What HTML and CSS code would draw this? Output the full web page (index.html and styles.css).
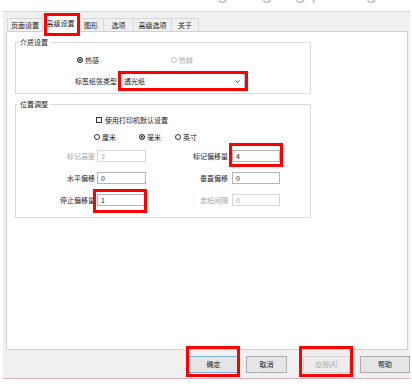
FILE: index.html
```html
<!DOCTYPE html>
<html>
<head>
<meta charset="utf-8">
<title>打印设置</title>
<link rel="stylesheet" href="styles.css">
</head>
<body>

<div class='recorte'><p class='recorte-texto'>Configuring tag printing settings</p></div>

<div id='janela'>

  <div class='abas'>
    <div class='aba w36'>页面设置</div>
    <div class='aba ativa w37'>高级设置<span class='marca m-aba'></span></div>
    <div class='aba w26'>图形</div>
    <div class='aba w31'>选项</div>
    <div class='aba w39'>高级选项</div>
    <div class='aba w28'>关于</div>
  </div>

  <div class='pagina'>

    <fieldset class='grupo' id='grupo1'>
      <legend>介质设置</legend>
      <div class='linha' id='linhatipo'>
        <span class='opcao'><span class='radio marcado'></span>热感</span>
        <span class='opcao desligado' id='opcaoterm'><span class='radio'></span>热转</span>
      </div>
      <div class='linha' id='linhapapel'>
        <span class='rotulo'>标签纸张类型</span>
        <span class='alvo'>
          <span class='combo'>透光纸
            <svg class='seta' width="5" height="3" viewBox="0 0 5 3"><polyline points="0.5,0.5 2.5,2.5 4.5,0.5" fill="none" stroke="#333" stroke-width="0.9"/></svg>
          </span>
          <span class='marca m-combo'></span>
        </span>
      </div>
    </fieldset>

    <fieldset class='grupo' id='grupo2'>
      <legend>位置调整</legend>
      <div class='linha' id='linhapadrao'>
        <span class='opcao'><span class='caixa'></span>使用打印机默认设置</span>
      </div>
      <div class='linha' id='linhaunidade'>
        <span class='opcao'><span class='radio'></span>厘米</span>
        <span class='opcao' id='opcaomm'><span class='radio marcado'></span>毫米</span>
        <span class='opcao' id='opcaopol'><span class='radio'></span>英寸</span>
      </div>

      <div class='campos'>
        <span class='rotulo desligado'>标记高度</span>
        <span class='entrada desligada'>3</span>
        <span class='rotulo dir'>标记偏移量</span>
        <span class='alvo'><span class='entrada'>4</span><span class='marca m-offset'></span></span>

        <span class='rotulo'>水平偏移</span>
        <span class='entrada'>0</span>
        <span class='rotulo dir'>垂直偏移</span>
        <span class='entrada'>0</span>

        <span class='rotulo'>停止偏移量</span>
        <span class='alvo'><span class='entrada'>1</span><span class='marca m-parada'></span></span>
        <span class='rotulo dir desligado'>走纸间隔</span>
        <span class='entrada desligada'>0</span>
      </div>
    </fieldset>

  </div>

  <div class='botoes'>
    <span class='alvo'><span class='botao padrao' id='bok'>确定</span><span class='marca m-ok'></span></span>
    <span class='botao' id='bcancel'>取消</span>
    <span class='alvo' id='aaplicar'><span class='botao inativo' id='baplicar'>应用(A)</span><span class='marca m-aplicar'></span></span>
    <span class='botao' id='bajuda'>帮助</span>
  </div>

</div>

</body>
</html>
```

FILE: styles.css
```css
*{ box-sizing: border-box; }
body{ margin: 0; background-color: #FFF; font-family: "Noto Sans CJK SC", "Noto Sans", sans-serif; font-size: 7px; color: #1A1A1A; }

.recorte{ height: 11px; overflow: hidden; }
.recorte-texto{ margin: -13px 0 0; padding-left: 170px; font-family: "Liberation Sans", sans-serif; font-size: 20px; line-height: 10px; color: #C4C4C4; white-space: nowrap; }

#janela{ margin-left: 3px; width: 407px; background-color: #F0F0F0; border-top: 1px solid #D6D6D6; border-bottom: 1px solid #DDB3C2; }

/* abas */
.abas{ display: flex; align-items: flex-end; padding: 2px 0 0 4px; height: 19px; }
.aba{ height: 13px; line-height: 12px; text-align: center; border: 1px solid #D9D9D9; border-bottom: none; background-color: #F0F0F0; white-space: nowrap; }
.aba + .aba{ margin-left: -1px; }
.aba.ativa{ position: relative; z-index: 1; height: 18px; line-height: 16px; margin-bottom: -1px; background-color: #FFF; }
.w26{ width: 26px; } .w28{ width: 28px; } .w31{ width: 31px; } .w36{ width: 36px; } .w37{ width: 37px; } .w39{ width: 39px; }

.pagina{ margin-left: 3px; width: 402px; height: 319px; background-color: #FFF; border: 1px solid #D0D0D0; padding-top: 6px; }

/* grupos */
.grupo{ margin: 0 0 0 8px; width: 296px; padding: 0; border: 1px solid #DCDCDC; }
.grupo legend{ margin-left: 2px; padding: 0 2px; line-height: 9px; }
#grupo1{ padding-bottom: 4px; }
#grupo2{ margin-top: 6px; padding-bottom: 11px; }

.linha{ display: flex; align-items: center; height: 11px; white-space: nowrap; }
#linhatipo{ margin-top: 7px; padding-left: 61px; }
#opcaoterm{ margin-left: 72px; }
#linhapapel{ margin-top: 8px; height: 16px; padding-left: 59px; }
#linhapadrao{ margin-top: 5px; padding-left: 80px; }
#linhaunidade{ margin-top: 6px; padding-left: 78px; }
#opcaomm{ margin-left: 23px; }
#opcaopol{ margin-left: 14px; }

.opcao{ display: inline-flex; align-items: center; }
.radio{ width: 6px; height: 6px; margin-right: 2px; border: 1px solid #333; border-radius: 50%; background-color: #FFF; }
.radio.marcado{ background-color: #222; box-shadow: inset 0 0 0 1px #FFF; }
.caixa{ width: 6px; height: 6px; margin-right: 3px; border: 1px solid #333; background-color: #FFF; }
.desligado{ color: #A6A6A6; }
.desligado .radio{ border-color: #C6C6C6; }

.rotulo{ white-space: nowrap; }
#linhapapel .rotulo{ margin-right: 3px; }

.combo{ display: flex; align-items: center; justify-content: space-between; width: 125px; height: 16px; padding: 0 4px 0 3px; border: 1px solid #BDBDBD; background-color: #FFF; }

/* campos de posicao */
.campos{ display: grid; grid-template-columns: 81px 49px 86px 48px; grid-auto-rows: 12px; row-gap: 10px; margin-top: 8px; align-items: center; }
.campos .rotulo{ text-align: right; padding-right: 2px; line-height: 12px; }
.campos .rotulo.dir{ padding-right: 4px; }
.entrada{ display: block; height: 12px; line-height: 10px; padding-left: 3px; border: 1px solid #B4B4B4; background-color: #FFF; }
.entrada.desligada{ border-color: #D7D7D7; color: #A6A6A6; }

/* marcas vermelhas */
.alvo{ position: relative; display: block; }
.marca{ position: absolute; border: 3px solid #F00; }
.m-aba{ left: 1px; top: -2px; width: 36px; height: 23px; }
.m-combo{ left: -2px; top: -2px; width: 130px; height: 20px; }
.m-offset{ left: -3px; top: -7px; width: 54px; height: 24px; }
.m-parada{ left: -4px; top: -5px; width: 54px; height: 24px; }
.m-ok{ left: -2px; top: -10px; width: 54px; height: 31px; }
.m-aplicar{ left: -4px; top: -10px; width: 54px; height: 31px; }

/* botoes */
.botoes{ display: flex; height: 28px; padding: 6px 0 0 185px; }
.botao{ display: block; height: 17px; line-height: 15px; text-align: center; border: 1px solid #ADADAD; background-color: #E5E5E5; white-space: nowrap; }
#bok{ width: 51px; border-color: #7AB2E6; }
#bcancel{ width: 41px; margin-left: 7px; }
#aaplicar{ margin-left: 16px; }
#baplicar{ width: 47px; }
#bajuda{ width: 50px; margin-left: 10px; }
.botao.inativo{ border-color: #D2D2D2; background-color: #EDEDED; color: #A6A6A6; }
```
